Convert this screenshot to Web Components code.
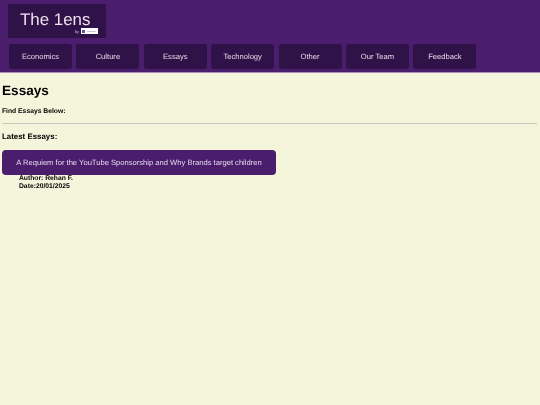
<!DOCTYPE html>
<html>
<head>
<meta charset="utf-8">
<title>Essays</title>
<style>
  html, body { margin: 0; height: 100%; background: #f5f5dc; }
  body { font-family: "Liberation Sans", Arial, sans-serif; color: #000; text-rendering: geometricPrecision; }
  /* the reference is a scaled down shot, so everything is a bit soft */
  site-header, essay-page { filter: blur(0.4px); }
</style>
</head>
<body>
<site-header>
  <nav-button>Economics</nav-button>
  <nav-button>Culture</nav-button>
  <nav-button>Essays</nav-button>
  <nav-button>Technology</nav-button>
  <nav-button>Other</nav-button>
  <nav-button>Our Team</nav-button>
  <nav-button>Feedback</nav-button>
</site-header>
<essay-page>
  <essay-item title="A Requiem for the YouTube Sponsorship and Why Brands target children" author="Rehan F." date="20/01/2025"></essay-item>
</essay-page>
<script>
class SiteHeader extends HTMLElement {
  constructor() {
    super();
    this.attachShadow({ mode: 'open' })
    this.shadowRoot.innerHTML = `
      <style>
        :host {
          display: block;
          box-sizing: border-box;
          height: 73px;
          padding: 4px 8px 0 9px;
          background: #4a1d6d;
          border-bottom: 1px solid #a98bbd;
        }
        .logo {
          box-sizing: border-box;
          width: 98px;
          height: 34px;
          margin-left: -1px;
          padding: 6px 0 0 12px;
          background: #2f1247;
          color: #f0dff0;
          font-size: 16.9px;
          line-height: 20px;
        }
        .by {
          display: flex;
          align-items: center;
          justify-content: flex-end;
          gap: 2px;
          margin: -2px 8px 0 0;
          font-size: 4px;
          line-height: 5px;
          color: #cdbcd8;
        }
        .badge {
          display: flex;
          align-items: center;
          gap: 2px;
          box-sizing: border-box;
          width: 17px;
          height: 6px;
          padding-left: 1px;
          background: #fff;
        }
        .badge i { width: 3px; height: 3px; background: #5a5a9a; }
        .badge b { width: 9px; height: 1px; background: #c9c6d8; }
        nav {
          display: flex;
          gap: 4.4px;
          margin-top: 6px;
        }
      </style>
      <div class="logo">The 1ens
        <div class="by">by <span class="badge"><i></i><b></b></span></div>
      </div>
      <nav><slot></slot></nav>
    `
  }
}

class NavButton extends HTMLElement {
  constructor() {
    super();
    this.attachShadow({ mode: 'open' })
    this.shadowRoot.innerHTML = `
      <style>
        :host {
          display: flex;
          align-items: center;
          justify-content: center;
          width: 63px;
          height: 25px;
          padding-bottom: 1px;
          box-sizing: border-box;
          border-radius: 3px;
          background: #2f1247;
          color: #e6d9ea;
          font-size: 7.6px;
          cursor: pointer;
        }
      </style>
      <slot></slot>
    `
  }
}

class EssayPage extends HTMLElement {
  constructor() {
    super();
    this.attachShadow({ mode: 'open' })
    this.shadowRoot.innerHTML = `
      <style>
        :host { display: block; padding: 0 3px 0 2px; }
        h1 { margin: 9px 0 0; font-size: 13.6px; line-height: 18px; }
        p { margin: 8px 0 0; font-size: 6.75px; line-height: 8px; font-weight: bold; }
        hr { margin: 7px 0 0; border: 0; border-top: 1px solid #c9c9bd; }
        h2 { margin: 8px 0 0; font-size: 7.9px; line-height: 10px; }
      </style>
      <h1>Essays</h1>
      <p>Find Essays Below:</p>
      <hr>
      <h2>Latest Essays:</h2>
      <slot></slot>
    `
  }
}

class EssayItem extends HTMLElement {
  constructor() {
    super();
    this.attachShadow({ mode: 'open' })
    this.shadowRoot.innerHTML = `
      <style>
        :host { display: block; margin-top: 8px; }
        .link {
          display: flex;
          align-items: center;
          justify-content: center;
          width: 274px;
          height: 25px;
          border-radius: 4px;
          background: #4a1d6d;
          color: #e6d9ea;
          font-size: 7.6px;
        }
        .meta {
          padding-left: 17px;
          font-size: 6.75px;
          line-height: 7.5px;
          font-weight: bold;
        }
      </style>
      <div class="link"></div>
      <div class="meta"><div class="author"></div><div class="date"></div></div>
    `
  }

  connectedCallback() {
    this.shadowRoot.querySelector('.link').textContent = this.getAttribute('title')
    this.shadowRoot.querySelector('.author').textContent = 'Author: ' + this.getAttribute('author')
    this.shadowRoot.querySelector('.date').textContent = 'Date:' + this.getAttribute('date')
  }
}

customElements.define('site-header', SiteHeader)
customElements.define('nav-button', NavButton)
customElements.define('essay-page', EssayPage)
customElements.define('essay-item', EssayItem)
</script>
</body>
</html>
